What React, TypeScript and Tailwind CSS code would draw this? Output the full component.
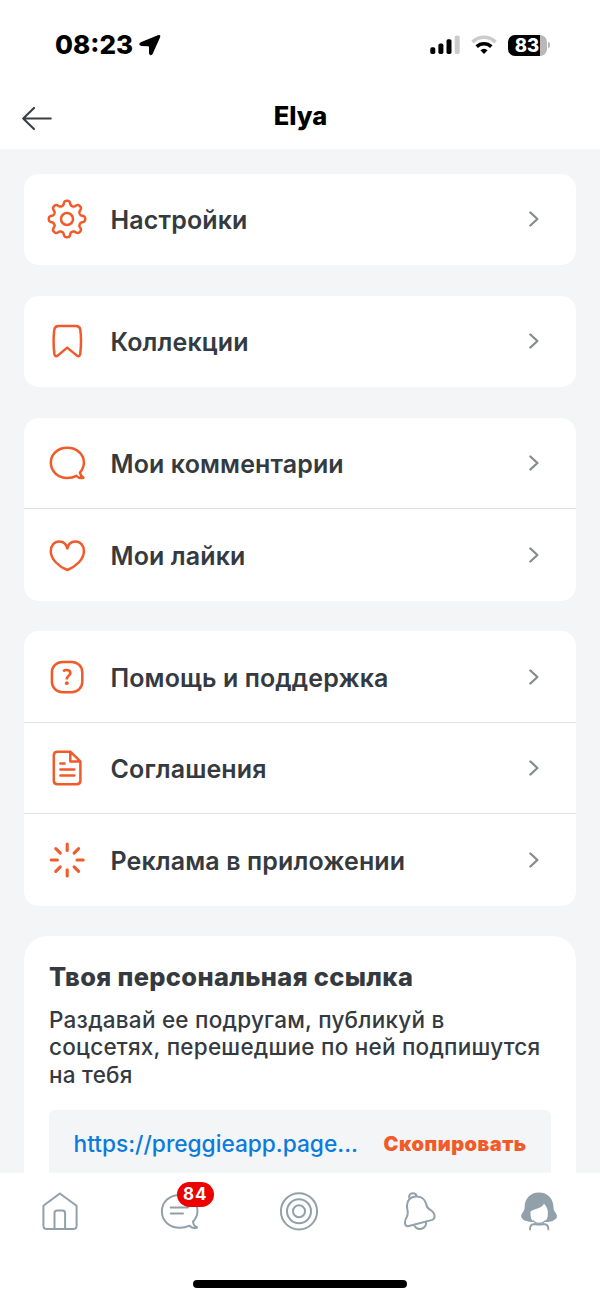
import type { ReactNode } from "react";

const gearPath =
  Array.from({ length: 240 }, (_, i) => {
    const a = (i / 240) * Math.PI * 2;
    const r = 16 + 2.2 * (Math.tanh(1.7 * Math.cos(8 * a)) / Math.tanh(1.7));
    const x = (20 + r * Math.sin(a)).toFixed(2);
    const y = (20 - r * Math.cos(a)).toFixed(2);
    return `${i ? "L" : "M"}${x} ${y}`;
  }).join("") + "Z";

function MenuIcon({ children, width = 2.5 }: { children: ReactNode; width?: number }) {
  return (
    <svg
      viewBox="0 0 40 40"
      className="size-10 shrink-0 text-[#f15a29]"
      fill="none"
      stroke="currentColor"
      strokeWidth={width}
      strokeLinecap="round"
      strokeLinejoin="round"
    >
      {children}
    </svg>
  );
}

const icons = {
  settings: (
    <MenuIcon>
      <path d={gearPath} />
      <circle cx="20" cy="20" r="6" />
    </MenuIcon>
  ),
  bookmark: (
    <MenuIcon>
      <path d="M11.5 5H29Q32.7 5 33.3 8.6Q34.8 20 33.2 33Q32.5 36.4 29.6 34.4L20.2 26.6L11 34.4Q8.1 36.4 7.4 33Q5.8 20 7.3 8.6Q7.8 5 11.5 5Z" />
    </MenuIcon>
  ),
  comment: (
    <MenuIcon>
      <path d="M20.3 4.8C29.6 4.8 36.9 10.9 36.9 19.6C36.9 23.9 35.1 27.2 32.9 29.6C33.4 31.8 34.2 33.5 36.4 34.7C33.6 35.6 31.3 35.1 29.3 32.8C26.6 34.3 23.4 34.9 20.3 34.9C11 34.9 3.8 28.4 3.8 19.6C3.8 10.9 11 4.8 20.3 4.8Z" />
    </MenuIcon>
  ),
  heart: (
    <MenuIcon>
      <path d="M20.3 13.5C19.2 8.8 16 6.5 12.3 6.5C7.3 6.5 3.8 10.4 3.8 16.2C3.8 24.2 11.4 31.4 20.3 35C29.2 31.4 36.9 24.2 36.9 16.2C36.9 10.4 33.3 6.5 28.3 6.5C24.6 6.5 21.4 8.8 20.3 13.5Z" />
    </MenuIcon>
  ),
  help: (
    <MenuIcon>
      <rect x="4.9" y="4.9" width="30.4" height="30.4" rx="10.5" />
      <path d="M16.1 14.2Q17.6 13 19.6 13Q23.3 13 23.3 15.9Q23.3 17.6 21.4 19Q19.8 20.2 19.8 22.4" strokeWidth="2.7" strokeLinecap="butt" />
      <circle cx="19.8" cy="26.2" r="1.9" fill="currentColor" stroke="none" />
    </MenuIcon>
  ),
  document: (
    <MenuIcon>
      <path d="M23.3 3.7H10.5Q6.8 3.7 6.8 7.4V32.6Q6.8 36.3 10.5 36.3H29.7Q33.4 36.3 33.4 32.6V13.4L23.3 3.7V13.4H33.4M13.4 15.6H17.6M13.4 21.6H27.3M13.4 27.6H27.3" />
    </MenuIcon>
  ),
  burst: (
    <MenuIcon width={3.1}>
      <path d="M20.2 4V10.4M20.2 29.8V36M4.2 20H10.4M30 20H36.2M8.8 8.6L13.3 13.1M27.1 26.9L31.6 31.4M8.8 31.4L13.3 26.9M27.1 13.1L31.6 8.6" />
    </MenuIcon>
  ),
};

function Row({ icon, label }: { icon: ReactNode; label: string }) {
  return (
    <div className="flex h-[91.5px] items-center pl-[23px] pr-[36.5px]">
      {icon}
      <span className="ml-[23.5px] flex-1 whitespace-nowrap pt-[1.5px] text-[25px] font-semibold leading-8 tracking-[0.12px]">{label}</span>
      <svg viewBox="0 0 10 16" className="h-4 w-2.5 text-[#848b91]" fill="none" stroke="currentColor" strokeWidth="2.3" strokeLinecap="round" strokeLinejoin="round">
        <path d="M1.4 1.5L8.4 8L1.4 14.5" />
      </svg>
    </div>
  );
}

function Card({ children }: { children: ReactNode }) {
  return <section className="overflow-hidden rounded-[15px] bg-white">{children}</section>;
}

function Divider() {
  return <div className="-mt-px h-px bg-[#dfe1e3]" />;
}

function NavIcon({ children }: { children: ReactNode }) {
  return (
    <svg viewBox="0 0 40 40" className="size-10" fill="none" stroke="currentColor" strokeWidth="2" strokeLinecap="round" strokeLinejoin="round">
      {children}
    </svg>
  );
}

function StatusBar() {
  return (
    <div className="flex h-[90px] items-center pl-[55px] pr-[50px]">
      <span className="text-[26px] font-extrabold leading-8">08:23</span>
      <svg viewBox="0 0 22 22" className="ml-1.5 size-[22px]" fill="currentColor">
        <path d="M1.7 8.3L18.8 1.2Q22.2 0.2 21 3.4L13.6 19.9Q11.3 22.7 10 19.6V13.1Q10 12.2 9 12.2L2.2 12Q-1.4 10.4 1.7 8.3Z" />
      </svg>
      <div className="ml-auto flex items-center">
        <svg viewBox="0 0 30 20" className="h-5 w-[30px]" fill="#000">
          <rect x="0.3" y="12.2" width="5" height="6.8" rx="1.7" />
          <rect x="8.4" y="8.5" width="5" height="10.5" rx="1.7" />
          <rect x="16.5" y="4.2" width="5" height="14.8" rx="1.7" />
          <rect x="24.7" y="0.4" width="5" height="18.6" rx="1.7" fill="#cbcbcb" />
        </svg>
        <svg viewBox="0 0 26 20" className="ml-[11px] h-5 w-[26px]" fill="none" strokeWidth="3.6">
          <path d="M1.5 7.1Q6.6 2.3 13 2.3Q19.4 2.3 24.5 7.1" stroke="#cbcbcb" />
          <path d="M5.7 11.7Q8.9 8.8 13 8.8Q17.1 8.8 20.3 11.7" stroke="#000" />
          <path d="M9.4 15.2Q13 12.1 16.6 15.2L13 18.9Z" fill="#000" />
        </svg>
        <div className="ml-[11px] flex h-[21px] w-[39px] items-center justify-center rounded-[7px] bg-linear-to-r from-black from-82% to-[#b8b8b8] to-82%">
          <span className="mr-[1px] text-[18.5px] font-extrabold leading-5 text-white">83</span>
        </div>
        <div className="ml-[1px] h-[6px] w-[2px] rounded-r-full bg-[#b8b8b8]" />
      </div>
    </div>
  );
}

export default function App() {
  return (
    <div className="flex h-[1300px] w-[600px] flex-col overflow-hidden bg-[#f4f5f7] font-[Inter,'Noto_Sans',sans-serif] text-[#343a40]">
      <header className="h-[149px] shrink-0 bg-white text-black">
        <StatusBar />
        <div className="grid grid-cols-3 items-center px-[22px] pt-[9.5px]">
          <svg viewBox="0 0 30 24" className="mt-[7px] h-6 w-[30px] text-[#3a3f44]" fill="none" stroke="currentColor" strokeWidth="2.1" strokeLinecap="round" strokeLinejoin="round">
            <path d="M28.8 11.5H1.2M12 0.9L1.2 11.5L12 22.1" />
          </svg>
          <h1 className="pl-px text-center text-[25.5px] font-extrabold leading-8">Elya</h1>
        </div>
      </header>

      <main className="flex min-h-0 flex-1 flex-col gap-[30.5px] overflow-hidden pl-6 pr-[24.5px] pt-[24.5px] *:shrink-0">
        <Card>
          <Row icon={icons.settings} label="Настройки" />
        </Card>
        <Card>
          <Row icon={icons.bookmark} label="Коллекции" />
        </Card>
        <Card>
          <Row icon={icons.comment} label="Мои комментарии" />
          <Divider />
          <Row icon={icons.heart} label="Мои лайки" />
        </Card>
        <Card>
          <Row icon={icons.help} label="Помощь и поддержка" />
          <Divider />
          <Row icon={icons.document} label="Соглашения" />
          <Divider />
          <Row icon={icons.burst} label="Реклама в приложении" />
        </Card>
        <section className="rounded-t-[24px] bg-white px-[25px] pt-[25px]">
          <h2 className="whitespace-nowrap text-[25.4px] font-extrabold leading-8 tracking-[0.36px]">Твоя персональная ссылка</h2>
          <p className="mt-[13px] whitespace-nowrap text-[22.5px] font-medium leading-[27.3px] tracking-[0.24px]">
            <span className="block">Раздавай ее подругам, публикуй в</span>
            <span className="block">соцсетях, перешедшие по ней подпишутся</span>
            <span className="block">на тебя</span>
          </p>
          <div className="mt-[22px] flex h-20 items-start justify-between rounded-[6px] bg-[#f4f5f7] pl-[24.5px] pr-6 pt-[18px] leading-8">
            <span className="whitespace-nowrap text-[22.7px] font-medium text-[#0b7bdc]">https://preggieapp.page...</span>
            <span className="whitespace-nowrap text-[20px] font-black tracking-[0.5px] text-[#f15a29]">Скопировать</span>
          </div>
        </section>
      </main>

      <footer className="flex h-[127px] shrink-0 flex-col items-center bg-white">
        <nav className="grid h-[76px] w-full grid-cols-5 justify-items-center pr-px pt-[18px] text-[#91a0a9]">
          <NavIcon>
            <path d="M19.8 2.5L36.6 14.8V34.4Q36.6 38 33 38H7Q3.4 38 3.4 34.4V14.8ZM14.5 38V22Q14.5 19.4 17.1 19.4H22.5Q25.1 19.4 25.1 22V38" />
          </NavIcon>
          <div className="relative size-10">
            <NavIcon>
              <path d="M20 4C30 4 37.5 10.5 37.5 20C37.5 24.5 36 27.5 33 30.5C33.2 33 34.8 35.5 37.2 36.5C34 37.6 31.2 36.5 29.5 34.7C26.5 36.2 23.3 36.8 20 36.8C9.6 36.8 1.9 30 1.9 20.4C1.9 10.8 9.6 4 20 4ZM10.7 16.5H28M10.7 22.6H23" />
            </NavIcon>
            <span className="absolute left-[17px] -top-[9px] flex h-[25px] w-[37px] items-center justify-center rounded-full bg-[#ec0000] text-[17px] font-bold tracking-[0.8px] text-white">84</span>
          </div>
          <NavIcon>
            <circle cx="20" cy="20.3" r="18.1" />
            <circle cx="20" cy="20.3" r="12" />
            <circle cx="20" cy="20.3" r="6" />
          </NavIcon>
          <NavIcon>
            <path d="M8 14.3C8.3 9 11.8 6.2 16.5 5.6C22 5 26 8 27.2 13C27.8 16.3 29.3 18 32 19.3C35 20.8 36 24.5 35.3 27Q34.9 28.4 33.2 28.9L9 35.2Q6.8 35.7 6.3 33.6C5.6 30.5 6.3 28 8 25.5C10 22 7.7 18.5 8 14.3ZM10.8 8C9.2 5 11 2.3 13.8 2.3C16 2.3 17.4 3.8 17.6 5.5M14.9 33.8C16.5 37 19.5 38.6 22.4 37.8C25.6 37 27.4 34.3 27.1 30.6" />
          </NavIcon>
          <NavIcon>
            <path fill="currentColor" stroke="none" d="M20 1.6C28.7 1.6 34.5 7.8 34.5 16.5C34.5 21 37.9 21.6 37.9 25.2C37.9 28.7 33 31 25.8 31C28.2 28.6 29 25.8 28.9 21.6C28.8 18 27.6 16 25 12.6C23.4 17.3 17 17.4 11.5 20.4C11.2 25.4 12 28.6 14.6 31.1C7 31 2.2 28.8 2.2 25.3C2.2 21.6 5.6 21 5.6 16.5C5.6 7.8 11.3 1.6 20 1.6Z" />
            <path d="M14 29.6C15.6 31.6 17.7 32.4 20.2 32.4C22.8 32.4 24.8 31.6 26.4 29.6" strokeWidth="1.2" />
            <path d="M11 38.4C11 34.8 12.8 33 16 33Q20.2 34.2 24.4 33C27.6 33 29.4 34.8 29.4 38.4" strokeWidth="1.9" />
          </NavIcon>
        </nav>
        <div className="mt-[31px] h-[8px] w-[214px] shrink-0 rounded-full bg-black" />
      </footer>
    </div>
  );
}
